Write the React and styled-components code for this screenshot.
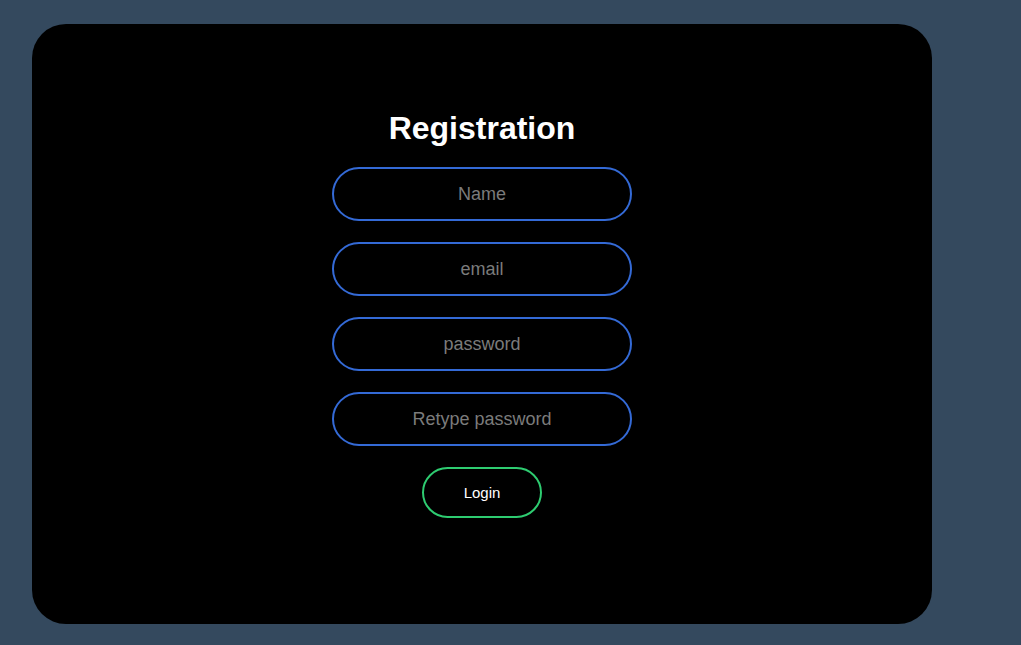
import React from "react";
import styled, { createGlobalStyle } from "styled-components";

const GlobalStyle = createGlobalStyle`
  html, body {
    margin: 0;
    padding: 0;
    background: #34495e;
    font-family: "Liberation Sans", Arial, sans-serif;
  }
`;

const Page = styled.div`
  min-height: 645px;
  padding: 24px 0 0 32px;
  box-sizing: border-box;
`;

const Card = styled.form`
  width: 900px;
  height: 600px;
  background: #000;
  border-radius: 34px;
  display: flex;
  flex-direction: column;
  align-items: center;
  gap: 21px;
  padding-top: 86px;
  box-sizing: border-box;
`;

const Title = styled.h1`
  margin: 0 0 -1px;
  color: #fff;
  font-size: 32px;
  font-weight: 700;
  line-height: 37px;
`;

const Field = styled.input`
  width: 300px;
  height: 54px;
  box-sizing: border-box;
  border: 2px solid #346ad6;
  border-radius: 27px;
  background: transparent;
  color: #fff;
  text-align: center;
  font-family: inherit;
  font-size: 18px;
  outline: none;

  &::placeholder {
    color: #7b7b7b;
  }
`;

const Button = styled.button`
  width: 120px;
  height: 51px;
  box-sizing: border-box;
  border: 2px solid #2ecc71;
  border-radius: 26px;
  background: transparent;
  color: #fff;
  font-family: inherit;
  font-size: 15px;
  cursor: pointer;
`;

const fields = [
  { type: "text", placeholder: "Name" },
  { type: "email", placeholder: "email" },
  { type: "password", placeholder: "password" },
  { type: "password", placeholder: "Retype password" },
];

export default function App() {
  return (
    <>
      <GlobalStyle />
      <Page>
        <Card onSubmit={(e) => e.preventDefault()}>
          <Title>Registration</Title>
          {fields.map((f) => (
            <Field key={f.placeholder} type={f.type} placeholder={f.placeholder} />
          ))}
          <Button type="submit">Login</Button>
        </Card>
      </Page>
    </>
  );
}
